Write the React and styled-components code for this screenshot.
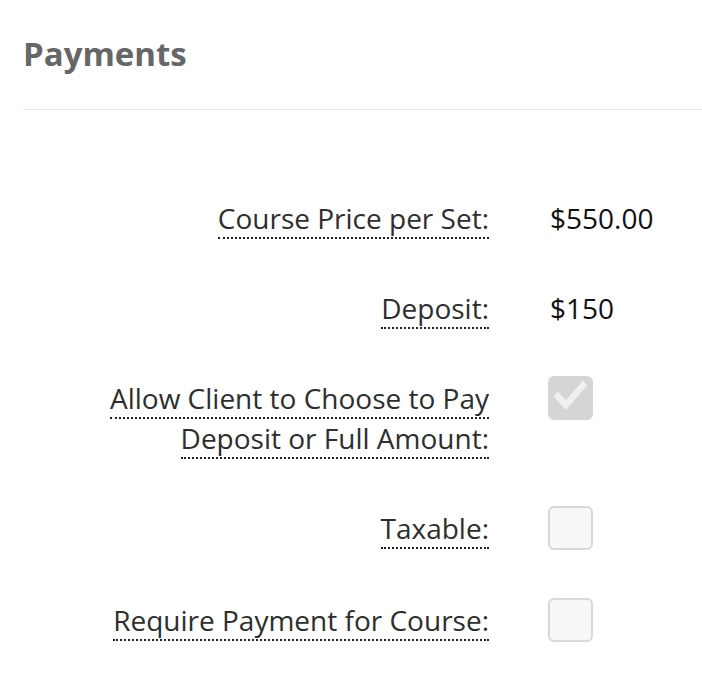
import React from "react";
import styled, { createGlobalStyle } from "styled-components";

const Global = createGlobalStyle`
  html, body { margin: 0; padding: 0; background: #fff; }
  body { font-family: "Open Sans", "Noto Sans", sans-serif; }
`;

const Page = styled.div`
  padding: 22px 0 0 23px;
`;

const Heading = styled.h2`
  margin: 0;
  font-size: 33px;
  line-height: 64px;
  font-weight: 700;
  color: #666;
  padding-bottom: 23px;
  border-bottom: 1px solid #e8e8e8;
`;

const Form = styled.div`
  display: grid;
  grid-template-columns: 466px auto;
  column-gap: 61px;
  row-gap: 50px;
  padding-top: 88px;
  align-items: start;
`;

const LabelCell = styled.div`
  text-align: right;
  font-size: 28px;
  line-height: 40px;
  color: #2e2e2e;
`;

const Label = styled.span`
  border-bottom: 2px dotted #222;
`;

const Value = styled.div`
  font-size: 28px;
  line-height: 40px;
  color: #111;
`;

const Box = styled.div`
  box-sizing: border-box;
  width: 45px;
  height: 44px;
  margin: -2px 0 0 -2px;
  border-radius: 6px;
  border: 2px solid ${(p) => (p.$checked ? "#d5d5d5" : "#d9d9d9")};
  background: ${(p) => (p.$checked ? "#d5d5d5" : "#f7f7f7")};
  display: flex;
  align-items: center;
  justify-content: center;
`;

const Checkbox = ({ checked }) => (
  <Box $checked={checked}>
    {checked && (
      <svg width="41" height="40" viewBox="0 0 41 40">
        <path d="M6 16 L16 27 L35 5" fill="none" stroke="#f0f0f0" strokeWidth="6.5" />
      </svg>
    )}
  </Box>
);

const rows = [
  { label: "Course Price per Set:", value: "$550.00" },
  { label: "Deposit:", value: "$150" },
  { label: "Allow Client to Choose to Pay Deposit or Full Amount:", check: true, checked: true },
  { label: "Taxable:", check: true },
  { label: "Require Payment for Course:", check: true },
];

export default function App() {
  return (
    <Page>
      <Global />
      <Heading>Payments</Heading>
      <Form>
        {rows.map((r) => (
          <React.Fragment key={r.label}>
            <LabelCell>
              <Label>{r.label}</Label>
            </LabelCell>
            {r.check ? <Checkbox checked={r.checked} /> : <Value>{r.value}</Value>}
          </React.Fragment>
        ))}
      </Form>
    </Page>
  );
}
